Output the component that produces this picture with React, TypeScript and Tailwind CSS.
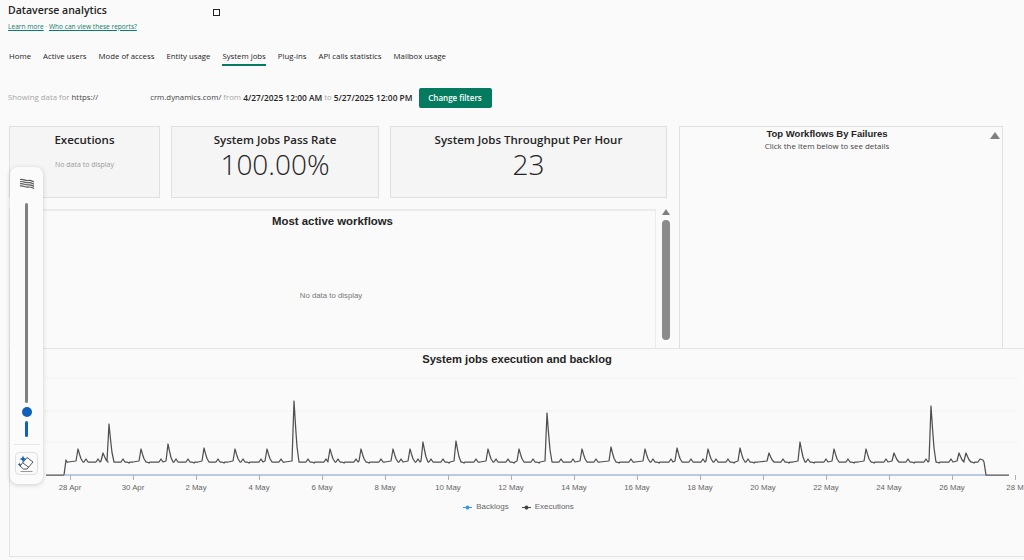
const navItems = ['Home', 'Active users', 'Mode of access', 'Entity usage', 'System jobs', 'Plug-ins', 'API calls statistics', 'Mailbox usage'];

const ticks = ['28 Apr', '30 Apr', '2 May', '4 May', '6 May', '8 May', '10 May', '12 May', '14 May', '16 May', '18 May', '20 May', '22 May', '24 May', '26 May', '28 M'];

// x, y of the taller spikes in the executions series
const spikes: [number, number][] = [
  [77, 448], [102, 452], [108, 423], [111, 440], [140, 448], [167, 443], [171, 448], [203, 447],
  [234, 448], [266, 448], [271, 451], [293, 400], [298, 448], [329, 448], [360, 448], [392, 448],
  [397, 447], [409, 448], [422, 441], [455, 440], [487, 448], [518, 448], [523, 446], [546, 412],
  [550, 447], [581, 448], [610, 446], [613, 447], [644, 448], [676, 447], [681, 418], [707, 448],
  [739, 447], [768, 452], [770, 440], [799, 441], [802, 448], [833, 448], [865, 448], [893, 452],
  [897, 448], [930, 405], [958, 452], [962, 440], [965, 452],
];

function buildLine() {
  const base = 461;
  const points: string[] = ['45,474', '63,474', '65,459', '66,461'];
  let x = 67;
  while (x < 978) {
    const spike = spikes.find((s) => s[0] >= x && s[0] < x + 6);
    if (spike) {
      const [sx, sy] = spike;
      const h = base - sy;
      points.push(`${sx - 2},${base - 1}`, `${sx},${sy}`, `${sx + 1.5},${sy + h * 0.4}`, `${sx + 3},${sy + h * 0.75}`, `${sx + 5},${base}`);
      x = sx + 6;
    } else {
      // small bumps along the baseline
      const step = (x * 7) % 5;
      points.push(`${x},${base}`);
      if (step < 2) points.push(`${x + 2},${base - 3}`, `${x + 4},${base}`);
      else if (step === 2) points.push(`${x + 2},${base + 1}`, `${x + 3},${base}`);
      x += 6;
    }
  }
  points.push('979,458', '982,459', '983,461', '985,474', '1008,474');
  return points.join(' ');
}

function ExecutionChart() {
  return (
    <svg width="1015" height="126" viewBox="9 368 1015 126" className="block">
      <line x1="44" y1="377" x2="1018" y2="377" stroke="#eeeeee" strokeDasharray="1 1" />
      <line x1="44" y1="410" x2="1018" y2="410" stroke="#e6e6e6" strokeDasharray="1 1" />
      <line x1="44" y1="441" x2="1018" y2="441" stroke="#eeeeee" strokeDasharray="1 1" />
      <line x1="64" y1="474" x2="985" y2="474" stroke="#7a9cc6" strokeWidth="1" />
      {ticks.map((t, i) => (
        <g key={t}>
          <line x1={69.5 + i * 63} y1="474" x2={69.5 + i * 63} y2="479" stroke="#b0b0b0" />
          <text x={69 + i * 63} y="489" textAnchor="middle" fontSize="7.8" fill="#666666" fontFamily="'Liberation Sans', sans-serif">
            {t}
          </text>
        </g>
      ))}
      <polyline points={buildLine()} fill="none" stroke="#505050" strokeWidth="1.25" strokeLinejoin="round" />
    </svg>
  );
}

function FlagIcon() {
  return (
    <svg width="16" height="12" viewBox="0 0 16 12" fill="none" stroke="#5a5a5a" strokeWidth="1.2">
      <path d="M1 1.5c3-1 5 1.5 8 1s4 .5 6 1.5" />
      <path d="M1 3.7c3-1 5 1.5 8 1s4 .5 6 1.5" />
      <path d="M1 5.9c3-1 5 1.5 8 1s4 .5 6 1.5" />
      <path d="M1 8.1c3-1 5 1.5 8 1s4 .5 6 1.5" />
    </svg>
  );
}

function EraserIcon() {
  return (
    <svg width="20" height="20" viewBox="0 0 20 20" fill="none">
      <path d="M10 3.5l6 4.5-6 7H6.5L3 12z" fill="#ffffff" stroke="#555555" strokeWidth="1" strokeLinejoin="round" />
      <path d="M6 9l6 4.5" stroke="#555555" strokeWidth="1" />
      <path d="M3.5 17.5h12" stroke="#999999" strokeWidth="1" />
      <path d="M6 1.5l1 2.5 2.5 1-2.5 1-1 2.5-1-2.5-2.5-1 2.5-1z" fill="#0f62b8" />
      <path d="M2.5 8.5l.6 1.4 1.4.6-1.4.6-.6 1.4-.6-1.4-1.4-.6 1.4-.6z" fill="#0f62b8" />
    </svg>
  );
}

function Toolbar() {
  return (
    <div className="absolute left-[10px] top-[167px] w-[33px] h-[317px] bg-[#fbfbfb] rounded-[8px] shadow-[0_1px_5px_rgba(0,0,0,0.18)] flex flex-col items-center">
      <div className="mt-[11px]">
        <FlagIcon />
      </div>
      <div className="mt-[13px] w-[3px] h-[200px] bg-[#808080] rounded-full" />
      <div className="mt-[4px] w-[10px] h-[10px] rounded-full bg-[#0f62b8]" />
      <div className="mt-[4px] w-[3px] h-[16px] bg-[#0f62b8] rounded-full" />
      <div className="mt-[7px] w-[26px] border-t border-[#e6e6e6]" />
      <div className="mt-[7px] w-[23px] h-[23px] border border-[#e0e0e0] rounded-[4px] bg-[#fafafa] flex items-center justify-center">
        <EraserIcon />
      </div>
    </div>
  );
}

export default function App() {
  return (
    <div className="relative w-[1024px] h-[560px] overflow-hidden bg-[#fafafa] font-['Open_Sans','Noto_Sans',sans-serif] text-[#242424]">
      {/* Header */}
      <div className="h-[126px] pl-[8px] relative">
        <div className="pt-[3px] text-[10.5px] leading-[15px] font-semibold">Dataverse analytics</div>
        <div className="mt-[4px] text-[6.6px] leading-[10px] text-[#0f7b6c]">
          <span className="underline">Learn more</span>
          <span className="text-[#777777]"> · </span>
          <span className="underline">Who can view these reports?</span>
        </div>
        <div className="absolute left-[213px] top-[9px] w-[7px] h-[7px] border border-[#222222] bg-white" />

        <div className="mt-[17px] flex gap-[12px] pl-[1px] text-[7.8px] leading-[14px]">
          {navItems.map((item) => (
            <div
              key={item}
              className={item === 'System jobs' ? 'h-[17px] border-b-2 border-[#047a5e] whitespace-nowrap' : 'h-[17px] whitespace-nowrap'}
            >
              {item}
            </div>
          ))}
        </div>

        <div className="mt-[22px] flex items-center h-[20px] text-[7.8px] whitespace-nowrap">
          <span className="text-[#a6a6a6]">Showing data for&nbsp;</span>
          <span className="text-[#444444]">https://</span>
          <span className="w-[52px]" />
          <span className="text-[#444444]">crm.dynamics.com/</span>
          <span className="text-[#a6a6a6]">&nbsp;from&nbsp;</span>
          <span className="text-[8.4px] font-semibold">4/27/2025 12:00 AM</span>
          <span className="text-[#a6a6a6]">&nbsp;to&nbsp;</span>
          <span className="text-[8.4px] font-semibold">5/27/2025 12:00 PM</span>
          <button className="ml-[6px] w-[73px] h-[20px] rounded-[2px] bg-[#047a5e] text-white text-[8px] font-semibold">
            Change filters
          </button>
        </div>
      </div>

      {/* Cards and side panel */}
      <div className="flex h-[222px] pl-[9px] gap-[12px]">
        <div className="w-[658px] flex flex-col gap-[11px]">
          <div className="flex h-[72px] gap-[11px]">
            <div className="w-[151px] bg-[#f5f5f5] border border-[#e0e0e0] flex flex-col items-center pt-[5px]">
              <div className="text-[11.5px] leading-[16px] font-semibold">Executions</div>
              <div className="mt-[12px] text-[7px] text-[#9a9a9a]">No data to display</div>
            </div>
            <div className="w-[208px] bg-[#f5f5f5] border border-[#e0e0e0] flex flex-col items-center pt-[5px]">
              <div className="text-[11.5px] leading-[16px] font-semibold">System Jobs Pass Rate</div>
              <div className="text-[28px] leading-[32px] font-light">100.00%</div>
            </div>
            <div className="flex-1 bg-[#f5f5f5] border border-[#e0e0e0] flex flex-col items-center pt-[5px]">
              <div className="text-[11.5px] leading-[16px] font-semibold">System Jobs Throughput Per Hour</div>
              <div className="text-[28px] leading-[32px] font-light">23</div>
            </div>
          </div>
          <div className="flex-1 flex">
            <div className="w-[647px] shrink-0 border-t-2 border-r border-l border-[#ebebeb] flex flex-col items-center font-['Liberation_Sans',sans-serif]">
              <div className="mt-[3px] text-[11.4px] leading-[15px] font-bold">Most active workflows</div>
              <div className="mt-[61px] pr-[3px] text-[7.8px] text-[#777777]">No data to display</div>
            </div>
            <div className="w-[20px] shrink-0 flex flex-col items-center">
              <div className="w-0 h-0 border-l-[4px] border-r-[4px] border-b-[6px] border-l-transparent border-r-transparent border-b-[#808080]" />
              <div className="mt-[5px] w-[8px] h-[120px] rounded-full bg-[#8a8a8a]" />
            </div>
          </div>
        </div>

        <div className="w-[324px] pr-[28px] border-t border-l border-r border-[#e0e0e0] relative flex flex-col items-center">
          <div className="text-[9.5px] leading-[12px] mt-px font-bold font-['Liberation_Sans',sans-serif]">Top Workflows By Failures</div>
          <div className="text-[7.9px] leading-[13px] text-[#444444]">Click the item below to see details</div>
          <div className="absolute right-[2px] top-[5px] w-0 h-0 border-l-[5px] border-r-[5px] border-b-[7px] border-l-transparent border-r-transparent border-b-[#808080]" />
        </div>
      </div>

      {/* Execution chart */}
      <div className="ml-[9px] h-[209px] border-t border-b border-l border-[#e4e4e4] font-['Liberation_Sans',sans-serif]">
        <div className="h-[20px] flex items-center justify-center text-[11.2px] font-bold">System jobs execution and backlog</div>
        <ExecutionChart />
        <div className="mt-[6px] pl-[3px] flex justify-center gap-[13px] text-[8px] leading-[12px] text-[#666666]">
          <div className="flex items-center gap-[4px]">
            <svg width="9" height="5" viewBox="0 0 9 5">
              <line x1="0" y1="2.5" x2="9" y2="2.5" stroke="#3b9ae1" />
              <circle cx="4.5" cy="2.5" r="2" fill="#3b9ae1" />
            </svg>
            Backlogs
          </div>
          <div className="flex items-center gap-[4px]">
            <svg width="9" height="5" viewBox="0 0 9 5">
              <line x1="0" y1="2.5" x2="9" y2="2.5" stroke="#444444" />
              <circle cx="4.5" cy="2.5" r="2" fill="#444444" />
            </svg>
            Executions
          </div>
        </div>
      </div>

      <Toolbar />
    </div>
  );
}
